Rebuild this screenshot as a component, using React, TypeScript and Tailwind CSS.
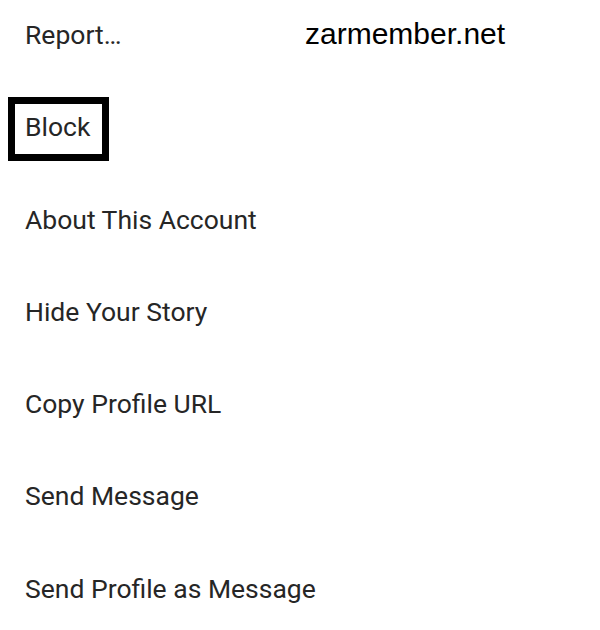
import React from 'react';

const items = [
  'Report…',
  'Block',
  'About This Account',
  'Hide Your Story',
  'Copy Profile URL',
  'Send Message',
  'Send Profile as Message',
];

function MenuRow({ label }: { label: string }) {
  const highlighted = label === 'Block';
  return (
    <div className="h-[92.3px] pl-[25px] pt-[19px]">
      {highlighted ? (
        <span className="-ml-[17px] -mt-[14px] block w-fit border-[7px] border-black pt-[7px] pb-[11px] pl-[10px] pr-[12px] leading-[32px]">
          {label}
        </span>
      ) : (
        <span className="block leading-[32px]">{label}</span>
      )}
    </div>
  );
}

export default function App() {
  return (
    <div className="relative h-[630px] w-[600px] overflow-hidden bg-white">
      <div className="absolute left-[305px] top-[18px] text-[30px] leading-[32px] text-black [font-family:'Liberation_Sans',Arial,sans-serif]">
        zarmember.net
      </div>
      <div className="flex flex-col text-[26.5px] text-[#262626] [font-family:Roboto,'Noto_Sans',sans-serif]">
        {items.map((item) => (
          <MenuRow key={item} label={item} />
        ))}
      </div>
    </div>
  );
}
